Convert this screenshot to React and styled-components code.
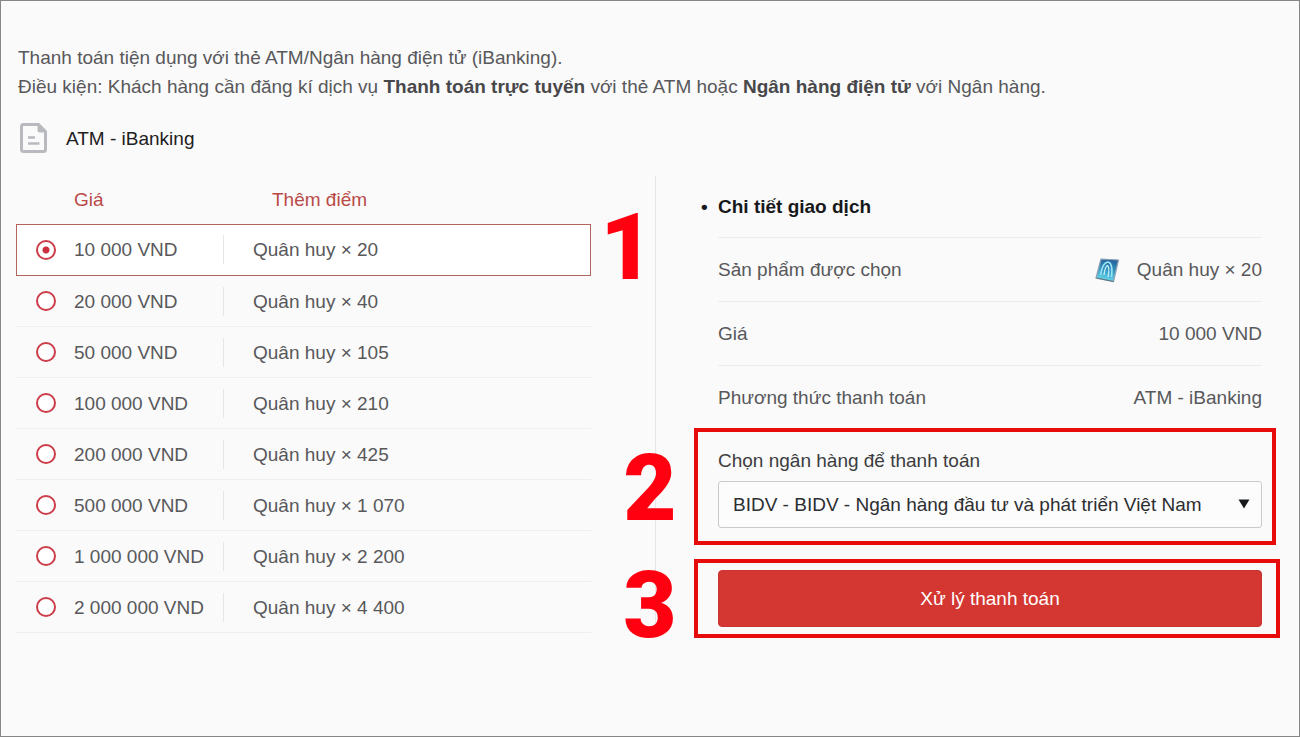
import React, { useState } from "react";
import styled, { createGlobalStyle } from "styled-components";

const GlobalStyle = createGlobalStyle`
  *, *::before, *::after { box-sizing: border-box; }
  body {
    margin: 0;
    background: #fafafa;
    color: #58585a;
    font-family: "Liberation Sans", Arial, sans-serif;
    font-size: 19px;
    line-height: 29px;
  }
`;

const Page = styled.main`
  min-height: 100vh;
  padding: 42px 37px 42px 15px;
  border: 1px solid #868686;
`;

const Intro = styled.p`
  margin: 0 0 22px 2px;
  strong { color: #48484a; }
`;

const Method = styled.h1`
  display: flex;
  align-items: center;
  gap: 18px;
  height: 30px;
  margin: 0 0 23px 3px;
  color: #1f2022;
  font-size: 19px;
  font-weight: 400;
`;

const Columns = styled.div`
  display: grid;
  grid-template-columns: 639fr 607fr;
  align-items: start;
`;

const Prices = styled.section`
  position: relative;
  padding-right: 64px;
`;

const PriceTable = styled.table`
  width: 100%;
  table-layout: fixed;
  border-collapse: separate;
  border-spacing: 0;
  text-align: left;
`;

const RadioCol = styled.col`
  width: 58px;
`;

const PriceCol = styled.col`
  width: 149px;
`;

const HeadCell = styled.th`
  height: 48px;
  padding: 0 0 2px ${(p) => (p.$indent ? "49px" : "0")};
  color: #b94a48;
  font-weight: 400;
`;

const PriceRow = styled.tr`
  height: ${(p) => (p.$selected ? "52px" : "51px")};
  background: ${(p) => (p.$selected ? "#fff" : "transparent")};
  outline: ${(p) => (p.$selected ? "1px solid #b4645c" : "none")};
  outline-offset: -1px;
  cursor: pointer;
`;

const Cell = styled.td`
  padding: 0;
  border-bottom: 1px solid #eeeeee;
`;

const Radio = styled.input`
  appearance: none;
  display: block;
  width: 20px;
  height: 20px;
  margin: 0 0 0 20px;
  border: 2px solid #cb3d49;
  border-radius: 50%;
  background: #fff;
  &:checked {
    background: radial-gradient(circle, #cb3040 3px, #fff 4px);
  }
`;

const Points = styled.span`
  display: block;
  padding-left: 29px;
  border-left: 1px solid #e6e6e6;
`;

const Details = styled.section`
  position: relative;
  padding-left: 45px;
  border-left: 1px solid #e6e6e6;
`;

const DetailsTitle = styled.h2`
  display: flex;
  align-items: center;
  height: 61px;
  margin: 0;
  color: #17181a;
  font-size: 19px;
`;

const Bullet = styled.span`
  width: 17px;
`;

const DetailsBody = styled.div`
  margin-left: 17px;
`;

const Summary = styled.dl`
  margin: 0;
`;

const SummaryRow = styled.div`
  display: flex;
  align-items: center;
  justify-content: space-between;
  height: 64px;
  border-top: 1px solid #ececec;
`;

const Value = styled.dd`
  display: flex;
  align-items: center;
  gap: 16px;
  margin: 0;
`;

const Step = styled.div`
  position: relative;
`;

const BankStep = styled(Step)`
  padding: 17px 0 42px;
`;

const BankLabel = styled.label`
  display: block;
  margin-bottom: 6px;
  color: #3c3d40;
`;

const SelectBox = styled.div`
  position: relative;
`;

const BankSelect = styled.select`
  appearance: none;
  display: block;
  width: 100%;
  height: 47px;
  padding: 0 40px 0 14px;
  border: 1px solid #c9cacc;
  border-radius: 3px;
  background: #fcfcfc;
  color: #2d2e31;
  font: inherit;
`;

const Arrow = styled.svg`
  position: absolute;
  top: 18px;
  right: 12px;
  pointer-events: none;
`;

const PayButton = styled.button`
  display: block;
  width: 100%;
  height: 57px;
  padding: 0;
  border: 1px solid #c93430;
  border-radius: 4px;
  background: #d43732;
  color: #fff;
  font: inherit;
  cursor: pointer;
`;

const Frame = styled.span`
  position: absolute;
  inset: ${(p) => p.$inset};
  border: 4px solid #e60c0c;
  pointer-events: none;
`;

const StepNumber = styled.span`
  position: absolute;
  top: ${(p) => p.$top};
  left: ${(p) => p.$left};
  width: 44px;
  display: flex;
  justify-content: center;
  color: #ff0010;
  font-family: Roboto, sans-serif;
  font-size: 92px;
  font-weight: 900;
  line-height: 68px;
  pointer-events: none;
`;

const offers = [
  ["10 000 VND", "20"],
  ["20 000 VND", "40"],
  ["50 000 VND", "105"],
  ["100 000 VND", "210"],
  ["200 000 VND", "425"],
  ["500 000 VND", "1 070"],
  ["1 000 000 VND", "2 200"],
  ["2 000 000 VND", "4 400"],
];

function DocumentIcon() {
  return (
    <svg width="29" height="32" viewBox="0 0 29 32" fill="none" aria-hidden="true">
      <path d="M4.500 2.500H19.500L26.500 9.500V27.500Q26.500 29.500 24.500 29.500H4.500Q2.500 29.500 2.500 27.500V4.500Q2.500 2.500 4.500 2.500Z" stroke="#b9babf" strokeWidth="3" />
      <path d="M18.500 2L27 10.500H20.500Q18.500 10.500 18.500 8.500Z" fill="#b9babf" />
      <path d="M9 15.500H16M9 21.500H20.500" stroke="#b9babf" strokeWidth="2.600" />
    </svg>
  );
}

function TokenIcon() {
  return (
    <svg width="26" height="26" viewBox="0 0 26 26" aria-hidden="true">
      <defs>
        <linearGradient id="token" x1="0.600" y1="0" x2="0.400" y2="1">
          <stop offset="0" stopColor="#245f98" />
          <stop offset="0.500" stopColor="#3498c4" />
          <stop offset="1" stopColor="#6be0ee" />
        </linearGradient>
      </defs>
      <path d="M6 2L23.500 3L18.500 24.500L1 21Z" fill="url(#token)" stroke="#8fa1b5" strokeWidth="1.200" />
      <path d="M5.500 18Q7.500 5.500 13 5Q18 5.500 16.500 20" fill="none" stroke="#9de4f2" strokeWidth="1.600" />
      <path d="M9 18Q10 9.500 12.500 8.500Q15 11 13 20" fill="none" stroke="#c8f3f8" strokeWidth="1.200" />
      <path d="M1.500 21L18.500 24.500" stroke="#5d7584" strokeWidth="1.200" />
    </svg>
  );
}

export default function App() {
  const [selected, setSelected] = useState(0);
  const [price, amount] = offers[selected];

  return (
    <>
      <GlobalStyle />
      <Page>
        <Intro>
          Thanh toán tiện dụng với thẻ ATM/Ngân hàng điện tử (iBanking).
          <br />
          Điều kiện: Khách hàng cần đăng kí dịch vụ <strong>Thanh toán trực tuyến</strong> với thẻ ATM hoặc{" "}
          <strong>Ngân hàng điện tử</strong> với Ngân hàng.
        </Intro>
        <Method>
          <DocumentIcon />
          ATM - iBanking
        </Method>
        <Columns>
          <Prices>
            <PriceTable>
              <colgroup>
                <RadioCol />
                <PriceCol />
                <col />
              </colgroup>
              <thead>
                <tr>
                  <HeadCell aria-hidden="true" />
                  <HeadCell scope="col">Giá</HeadCell>
                  <HeadCell scope="col" $indent>Thêm điểm</HeadCell>
                </tr>
              </thead>
              <tbody>
                {offers.map(([label, points], i) => (
                  <PriceRow key={label} $selected={i === selected} onClick={() => setSelected(i)}>
                    <Cell>
                      <Radio
                        type="radio"
                        name="offer"
                        id={`offer-${i}`}
                        checked={i === selected}
                        onChange={() => setSelected(i)}
                      />
                    </Cell>
                    <Cell>
                      <label htmlFor={`offer-${i}`}>{label}</label>
                    </Cell>
                    <Cell>
                      <Points>Quân huy × {points}</Points>
                    </Cell>
                  </PriceRow>
                ))}
              </tbody>
            </PriceTable>
            <StepNumber $top="38px" $left="calc(100% - 50px)">1</StepNumber>
          </Prices>
          <Details>
            <DetailsTitle>
              <Bullet>•</Bullet>Chi tiết giao dịch
            </DetailsTitle>
            <DetailsBody>
              <Summary>
                <SummaryRow>
                  <dt>Sản phẩm được chọn</dt>
                  <Value>
                    <TokenIcon />
                    Quân huy × {amount}
                  </Value>
                </SummaryRow>
                <SummaryRow>
                  <dt>Giá</dt>
                  <Value>{price}</Value>
                </SummaryRow>
                <SummaryRow>
                  <dt>Phương thức thanh toán</dt>
                  <Value>ATM - iBanking</Value>
                </SummaryRow>
              </Summary>
              <BankStep>
                <BankLabel htmlFor="bank">Chọn ngân hàng để thanh toán</BankLabel>
                <SelectBox>
                  <BankSelect id="bank">
                    <option>BIDV - BIDV - Ngân hàng đầu tư và phát triển Việt Nam</option>
                  </BankSelect>
                  <Arrow width="12" height="10" viewBox="0 0 12 10" aria-hidden="true">
                    <path d="M0.500 0.500H11.500L6 9.500Z" fill="#17181a" />
                  </Arrow>
                </SelectBox>
                <Frame $inset="-1px -14px 25px -24px" />
                <StepNumber $top="26px" $left="-90px">2</StepNumber>
              </BankStep>
              <Step>
                <PayButton type="button">Xử lý thanh toán</PayButton>
                <Frame $inset="-11px -18px -11px -24px" />
                <StepNumber $top="2px" $left="-90px">3</StepNumber>
              </Step>
            </DetailsBody>
          </Details>
        </Columns>
      </Page>
    </>
  );
}
